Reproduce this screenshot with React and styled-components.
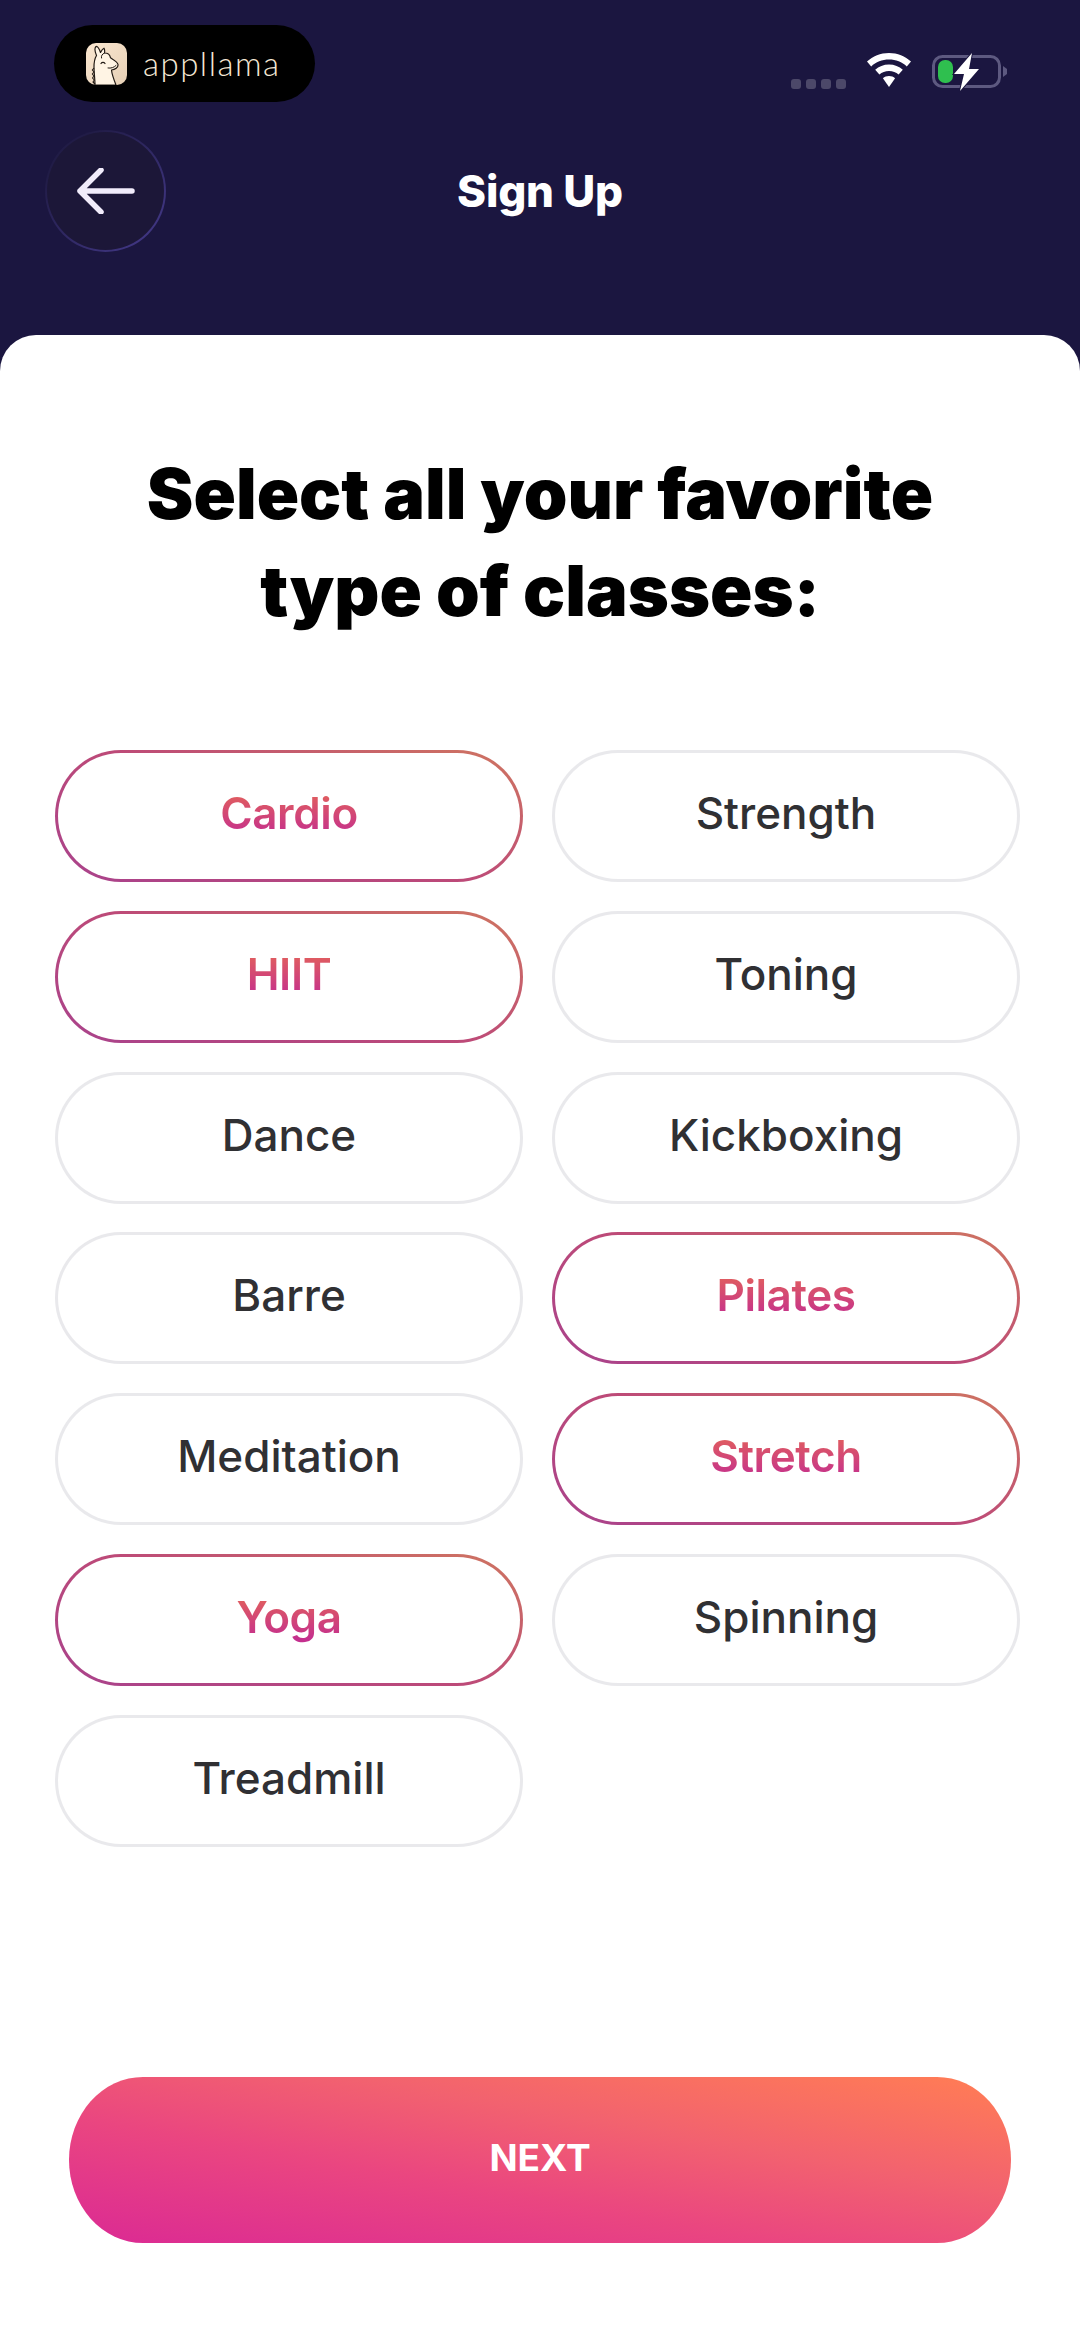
import React from 'react';
import styled, { createGlobalStyle } from 'styled-components';

const Global = createGlobalStyle`
  html, body { margin: 0; padding: 0; background: #1b1640; }
  * { box-sizing: border-box; }
`;

const Screen = styled.div`
  width: 1080px;
  height: 2337px;
  display: flex;
  flex-direction: column;
  background: #1b1640;
  font-family: Inter, "Liberation Sans", sans-serif;
  overflow: hidden;
`;

const Header = styled.header`
  height: 335px;
  flex: none;
  display: flex;
  flex-direction: column;
`;

const StatusBar = styled.div`
  display: flex;
  align-items: flex-start;
  justify-content: space-between;
  padding: 25px 72px 0 54px;
  height: 130px;
`;

const BrandPill = styled.div`
  width: 261px;
  height: 77px;
  border-radius: 39px;
  background: #000;
  display: flex;
  align-items: center;
  padding-left: 32px;
  gap: 16px;
`;

const BrandName = styled.span`
  font-family: Lato, sans-serif;
  font-weight: 300;
  font-size: 33px;
  letter-spacing: 1.5px;
  color: #f5e8d5;
  line-height: 1;
`;

const StatusIcons = styled.div`
  display: flex;
  align-items: flex-start;
  padding-top: 28px;
  gap: 20px;
`;

const Dots = styled.div`
  display: flex;
  gap: 5px;
  margin-top: 26px;
`;

const Dot = styled.span`
  width: 10px;
  height: 10px;
  border-radius: 3px;
  background: #4c4869;
`;

const NavRow = styled.nav`
  position: relative;
  display: flex;
  align-items: center;
  justify-content: center;
  height: 122px;
`;

const BackButton = styled.button`
  position: absolute;
  left: 45px;
  top: 0;
  width: 121px;
  height: 122px;
  padding: 0;
  border-radius: 50%;
  border: 2px solid transparent;
  background:
    linear-gradient(#1c1738, #1c1738) padding-box,
    linear-gradient(135deg, #211c47 20%, #3f3580 85%) border-box;
  display: flex;
  align-items: center;
  justify-content: center;
`;

const Title = styled.h1`
  margin: 0;
  font-size: 44px;
  line-height: 1;
  font-weight: 800;
  color: #fff;
  letter-spacing: -0.2px;
`;

const Sheet = styled.main`
  flex: 1;
  background: #fff;
  border-radius: 36px 36px 0 0;
  display: flex;
  flex-direction: column;
  padding: 110px 60px 94px 55px;
`;

const Heading = styled.h2`
  margin: 0;
  text-align: center;
  font-size: 70px;
  line-height: 97px;
  font-weight: 900;
  color: #000;
  letter-spacing: 0;
  padding-left: 5px;
`;

const ChipGrid = styled.div`
  margin-top: 111px;
  display: grid;
  grid-template-columns: 468px 468px;
  grid-auto-rows: 132px;
  column-gap: 29px;
  row-gap: 28.8px;
`;

const Chip = styled.div`
  display: flex;
  align-items: center;
  justify-content: center;
  border-radius: 66px;
  border: 3px solid transparent;
  background: ${p => p.$on
    ? 'linear-gradient(#fff, #fff) padding-box, linear-gradient(20deg, #a9428c 0%, #bd4a78 50%, #cf7560 100%) border-box'
    : 'linear-gradient(#fff, #fff) padding-box, linear-gradient(#e9e9ec, #e9e9ec) border-box'};
`;

const ChipLabel = styled.span`
  font-size: 44px;
  line-height: 56px;
  font-weight: ${p => (p.$on ? 600 : 500)};
  letter-spacing: ${p => (p.$on ? '-0.4px' : '0')};
  color: ${p => (p.$on ? 'transparent' : '#303033')};
  background: ${p => (p.$on ? 'linear-gradient(to bottom, #e3625a 10%, #c42f8e 90%)' : 'none')};
  -webkit-background-clip: ${p => (p.$on ? 'text' : 'border-box')};
  background-clip: ${p => (p.$on ? 'text' : 'border-box')};
  position: relative;
  top: -3px;
`;

const Spacer = styled.div`
  flex: 1;
`;

const NextButton = styled.button`
  align-self: center;
  width: 942px;
  height: 166px;
  margin-left: 5px;
  padding: 0 0 6px;
  border: 0;
  border-radius: 74px / 83px;
  background: linear-gradient(to top right, #dc2c92 3%, #ea4680 38%, #f2626f 65%, #ff7b56 97%);
  color: #fff;
  font-family: Inter, sans-serif;
  font-size: 37px;
  font-weight: 700;
`;

const classes = [
  ['Cardio', true], ['Strength', false],
  ['HIIT', true], ['Toning', false],
  ['Dance', false], ['Kickboxing', false],
  ['Barre', false], ['Pilates', true],
  ['Meditation', false], ['Stretch', true],
  ['Yoga', true], ['Spinning', false],
  ['Treadmill', false],
];

const LlamaIcon = () => (
  <svg width="41" height="42" viewBox="0 0 41 42" aria-hidden="true">
    <defs>
      <linearGradient id="llamaBg" x1="0" y1="0" x2="1" y2="1">
        <stop offset="0" stopColor="#fbe7d0" />
        <stop offset="1" stopColor="#e6d0b6" />
      </linearGradient>
    </defs>
    <rect width="41" height="42" rx="10" fill="url(#llamaBg)" />
    <path d="M9 42 C9 36 8 30 8 24 C8 19 9 15 10.5 12.5 C9 9 8.5 5 10 3.5 C11.5 3 13.5 6 14.5 9.5 C15.5 7.5 16.5 5.8 18 5.2 C18.8 6.8 18.8 8.5 18.5 10 C21.5 10 24 11.8 24.5 14.8 C27 16.5 31.5 18.5 32 21.5 C32.4 24.5 29 26.8 25.5 27 C26 32 28 37 30 42 Z" fill="#fff4e4" stroke="#221a14" strokeWidth="1.2" strokeLinejoin="round" />
    <path d="M8 25 L6.3 27 L8 29 L6.3 31 L8 33 L6.5 35 L8.3 37 L7 39 L9 41" fill="none" stroke="#221a14" strokeWidth="1.1" strokeLinejoin="round" />
    <path d="M15 20.5 C16 19 18 19 19 20.5" fill="none" stroke="#221a14" strokeWidth="1.2" strokeLinecap="round" />
    <path d="M22 25 C25 25.5 28 24.5 30 22.5" fill="none" stroke="#221a14" strokeWidth="1" strokeLinecap="round" />
    <path d="M18.5 10 C16 11 15 13 15.5 15" fill="none" stroke="#221a14" strokeWidth="1" strokeLinecap="round" />
  </svg>
);

const WifiIcon = () => (
  <svg width="46" height="34" viewBox="0 0 46 34" aria-hidden="true">
    <path d="M23 0 C14.5 0 6.8 3.2 1 8.6 L5.2 13.4 C9.9 9.2 16.1 6.6 23 6.6 C29.9 6.6 36.1 9.2 40.8 13.4 L45 8.6 C39.2 3.2 31.5 0 23 0 Z" fill="#fff" />
    <path d="M23 11.5 C17.6 11.5 12.8 13.5 9.2 16.8 L13.4 21.6 C15.9 19.4 19.3 18 23 18 C26.7 18 30.1 19.4 32.6 21.6 L36.8 16.8 C33.2 13.5 28.4 11.5 23 11.5 Z" fill="#fff" />
    <path d="M23 23 C20.6 23 18.5 23.9 16.9 25.3 L23 34 L29.1 25.3 C27.5 23.9 25.4 23 23 23 Z" fill="#fff" />
  </svg>
);

const BatteryIcon = () => (
  <svg width="76" height="38" viewBox="0 0 76 38" aria-hidden="true">
    <rect x="1.5" y="3.5" width="66" height="30" rx="9" fill="none" stroke="#5d5980" strokeWidth="3" />
    <path d="M71 13 L75 16 V21 L71 24 Z" fill="#5d5980" />
    <rect x="6" y="7" width="15" height="23" rx="7" fill="#2fbf4f" />
    <path d="M40 0 L22 21 H32 L28 38 L47 16 H37 Z" fill="#fff" stroke="#1b1640" strokeWidth="2" paintOrder="stroke" />
  </svg>
);

const BackArrow = () => (
  <svg width="58" height="46" viewBox="0 0 58 46" fill="none" aria-hidden="true">
    <path d="M24 2 L3 23 L24 44 M3 23 H55" stroke="#f1ecfb" strokeWidth="5.5" strokeLinecap="round" strokeLinejoin="round" />
  </svg>
);

export default function App() {
  return (
    <Screen>
      <Global />
      <Header>
        <StatusBar>
          <BrandPill>
            <LlamaIcon />
            <BrandName>appllama</BrandName>
          </BrandPill>
          <StatusIcons>
            <Dots><Dot /><Dot /><Dot /><Dot /></Dots>
            <WifiIcon />
            <BatteryIcon />
          </StatusIcons>
        </StatusBar>
        <NavRow>
          <BackButton aria-label="Back"><BackArrow /></BackButton>
          <Title>Sign Up</Title>
        </NavRow>
      </Header>
      <Sheet>
        <Heading>Select all your favorite<br />type of classes:</Heading>
        <ChipGrid>
          {classes.map(([name, on]) => (
            <Chip key={name} $on={on}>
              <ChipLabel $on={on}>{name}</ChipLabel>
            </Chip>
          ))}
        </ChipGrid>
        <Spacer />
        <NextButton>NEXT</NextButton>
      </Sheet>
    </Screen>
  );
}
